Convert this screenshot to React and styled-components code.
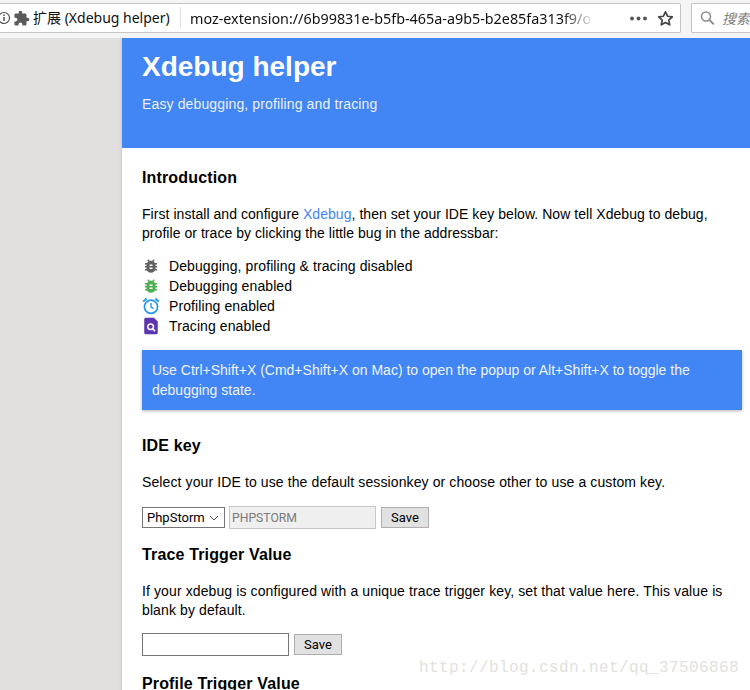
import styled, { createGlobalStyle } from "styled-components";
import { useState } from "react";

const GlobalStyle = createGlobalStyle`
  html, body {
    margin: 0;
    padding: 0;
    background: #e1e0de;
  }
  body {
    width: 750px;
    height: 690px;
    overflow: hidden;
    font-family: "Liberation Sans", Arial, sans-serif;
  }
`;

const BUG =
  "M20 8h-2.81c-.45-.78-1.07-1.45-1.82-1.96L17 4.41 15.59 3l-2.17 2.17C12.96 5.06 12.49 5 12 5c-.49 0-.96.06-1.41.17L8.41 3 7 4.41l1.62 1.63C7.88 6.55 7.26 7.22 6.81 8H4v2h2.09c-.05.33-.09.66-.09 1v1H4v2h2v1c0 .34.04.67.09 1H4v2h2.81c1.04 1.79 2.97 3 5.19 3s4.15-1.21 5.19-3H20v-2h-2.09c.05-.33.09-.66.09-1v-1h2v-2h-2v-1c0-.34-.04-.67-.09-1H20V8zm-6 8h-4v-2h4v2zm0-4h-4v-2h4v2z";

function BugIcon({ color }) {
  return (
    <svg width="18" height="18" viewBox="0 0 24 24">
      <path d={BUG} fill={color} />
    </svg>
  );
}

function AlarmIcon() {
  return (
    <svg width="18" height="18" viewBox="0 0 24 24" fill="none" stroke="#2196f3" strokeWidth="2.2">
      <circle cx="12" cy="13" r="8.8" />
      <path d="M12 8v5.4l3.4 2" strokeWidth="1.8" />
      <path d="M1.6 6.2 6.2 2M22.4 6.2 17.8 2" strokeWidth="2.4" />
    </svg>
  );
}

function TraceIcon() {
  return (
    <svg width="18" height="18" viewBox="0 0 24 24">
      <path d="M5 1h11l5 5v15a2 2 0 0 1-2 2H5a2 2 0 0 1-2-2V3a2 2 0 0 1 2-2z" fill="#5e35b1" />
      <circle cx="11.5" cy="13" r="3.8" fill="none" stroke="#fff" strokeWidth="2" />
      <path d="m14.4 15.9 3 3" stroke="#fff" strokeWidth="2.2" />
    </svg>
  );
}

function PuzzleIcon() {
  return (
    <svg width="17" height="17" viewBox="0 0 24 24">
      <path
        d="M20.5 11H19V7c0-1.1-.9-2-2-2h-4V3.5C13 2.12 11.88 1 10.5 1S8 2.12 8 3.5V5H4c-1.1 0-1.99.9-1.99 2v3.8H3.5c1.49 0 2.7 1.21 2.7 2.7s-1.21 2.7-2.7 2.7H2V20c0 1.1.9 2 2 2h3.8v-1.5c0-1.49 1.21-2.7 2.7-2.7 1.49 0 2.7 1.21 2.7 2.7V22H17c1.1 0 2-.9 2-2v-4h1.5c1.38 0 2.5-1.12 2.5-2.5S21.88 11 20.5 11z"
        fill="#5a5a5a"
      />
    </svg>
  );
}

function InfoIcon() {
  return (
    <svg width="12" height="14" viewBox="0 0 12 14" fill="none" stroke="#444">
      <circle cx="4" cy="7" r="5.5" strokeWidth="1.1" />
      <path d="M4 6v4M4 3.6v1.3" strokeWidth="1.4" />
    </svg>
  );
}

function DotsIcon() {
  return (
    <svg width="17" height="5" viewBox="0 0 17 5" fill="#555">
      <circle cx="2" cy="2.5" r="1.9" />
      <circle cx="8.5" cy="2.5" r="1.9" />
      <circle cx="15" cy="2.5" r="1.9" />
    </svg>
  );
}

function StarIcon() {
  return (
    <svg width="17" height="17" viewBox="0 0 24 24" fill="none" stroke="#444" strokeWidth="2.4" strokeLinejoin="round">
      <path d="M12 2.6l2.9 6.2 6.7.8-5 4.6 1.4 6.7-6-3.4-6 3.4 1.4-6.7-5-4.6 6.7-.8z" />
    </svg>
  );
}

function SearchIcon() {
  return (
    <svg width="18" height="18" viewBox="0 0 18 18" fill="none" stroke="#8a8a8a" strokeWidth="1.8">
      <circle cx="7.2" cy="7.2" r="5.4" />
      <path d="m11.2 11.2 5.4 5.4" strokeWidth="2.2" />
    </svg>
  );
}

function App() {
  const [ide, setIde] = useState("PhpStorm");

  return (
    <>
      <GlobalStyle />
      <Toolbar>
        <UrlBar>
          <InfoIcon />
          <PuzzleSlot>
            <PuzzleIcon />
          </PuzzleSlot>
          <SiteName>扩展 (Xdebug helper)</SiteName>
          <UrlText>moz-extension://6b99831e-b5fb-465a-a9b5-b2e85fa313f9/o</UrlText>
          <DotsSlot>
            <DotsIcon />
          </DotsSlot>
          <StarIcon />
        </UrlBar>
        <SearchBar>
          <SearchIcon />
          <SearchHint>搜索</SearchHint>
        </SearchBar>
      </Toolbar>
      <Page>
        <Sheet>
          <Banner>
            <BannerTitle>Xdebug helper</BannerTitle>
            <BannerSub>Easy debugging, profiling and tracing</BannerSub>
          </Banner>
          <Content>
            <SectionTitle>Introduction</SectionTitle>
            <Paragraph $spacing={0.05}>
              First install and configure <TextLink href="#">Xdebug</TextLink>, then set your IDE key below. Now tell
              Xdebug to debug, profile or trace by clicking the little bug in the addressbar:
            </Paragraph>
            <StateList>
              <StateRow>
                <BugIcon color="#616161" />
                Debugging, profiling &amp; tracing disabled
              </StateRow>
              <StateRow>
                <BugIcon color="#4caf50" />
                Debugging enabled
              </StateRow>
              <StateRow>
                <AlarmIcon />
                Profiling enabled
              </StateRow>
              <StateRow>
                <TraceIcon />
                Tracing enabled
              </StateRow>
            </StateList>
            <Notice>
              Use Ctrl+Shift+X (Cmd+Shift+X on Mac) to open the popup or Alt+Shift+X to toggle the debugging state.
            </Notice>
            <SectionTitle $top={26}>IDE key</SectionTitle>
            <Paragraph>Select your IDE to use the default sessionkey or choose other to use a custom key.</Paragraph>
            <FormRow>
              <IdeSelect value={ide} onChange={(e) => setIde(e.target.value)}>
                <option>PhpStorm</option>
                <option>Other</option>
              </IdeSelect>
              <KeyInput $disabled disabled value="PHPSTORM" readOnly />
              <SaveButton>Save</SaveButton>
            </FormRow>
            <SectionTitle $top={16}>Trace Trigger Value</SectionTitle>
            <Paragraph>
              If your xdebug is configured with a unique trace trigger key, set that value here. This value is blank by
              default.
            </Paragraph>
            <FormRow $top={13}>
              <KeyInput />
              <SaveButton>Save</SaveButton>
            </FormRow>
            <SectionTitle $top={18}>Profile Trigger Value</SectionTitle>
          </Content>
        </Sheet>
      </Page>
      <Watermark>http://blog.csdn.net/qq_37506868</Watermark>
    </>
  );
}

export default App;

const Toolbar = styled.div`
  height: 38px;
  box-sizing: border-box;
  padding-top: 3px;
  display: flex;
  background: #f5f5f5;
`;

const UrlBar = styled.div`
  width: 681px;
  height: 30px;
  box-sizing: border-box;
  display: flex;
  align-items: center;
  background: #fff;
  border: 1px solid #c4c4c4;
  border-left: none;
  border-radius: 0 2px 2px 0;
`;

const PuzzleSlot = styled.span`
  display: flex;
  margin-left: 1px;
  margin-right: 3px;
`;

const SiteName = styled.span`
  width: 148px;
  height: 22px;
  line-height: 22px;
  box-sizing: border-box;
  border-right: 1px solid #e2e2e2;
  font-family: "Noto Sans", "Noto Sans CJK SC", sans-serif;
  font-size: 14px;
  color: #111;
  white-space: nowrap;
  overflow: hidden;
`;

const UrlText = styled.span`
  width: 405px;
  margin-left: 9px;
  font-family: "Noto Sans", sans-serif;
  font-size: 14.35px;
  color: #111;
  white-space: nowrap;
  overflow: hidden;
  -webkit-mask-image: linear-gradient(to right, #000 92%, transparent 100%);
  mask-image: linear-gradient(to right, #000 92%, transparent 100%);
`;

const DotsSlot = styled.span`
  display: flex;
  margin-left: 35px;
  margin-right: 10px;
`;

const SearchBar = styled.div`
  margin-left: 10px;
  flex: 1;
  height: 30px;
  box-sizing: border-box;
  display: flex;
  align-items: center;
  gap: 7px;
  padding-left: 8px;
  background: #fff;
  border: 1px solid #c4c4c4;
  border-right: none;
  border-radius: 2px 0 0 2px;
  overflow: hidden;
`;

const SearchHint = styled.span`
  font-family: "Noto Sans CJK SC", sans-serif;
  font-size: 14px;
  font-style: italic;
  color: #808080;
  white-space: nowrap;
`;

const Page = styled.div`
  padding-left: 122px;
  height: 652px;
  overflow: hidden;
`;

const Sheet = styled.div`
  background: #fff;
  min-height: 652px;
  box-shadow: -1px 0 3px rgba(0, 0, 0, 0.1);
`;

const Banner = styled.header`
  height: 110px;
  box-sizing: border-box;
  padding: 13px 20px 0;
  background: #4285f4;
  color: #fff;
`;

const BannerTitle = styled.h1`
  margin: 0;
  font-size: 28px;
  line-height: 32px;
  font-weight: 700;
`;

const BannerSub = styled.p`
  margin: 11px 0 0;
  font-size: 14px;
  line-height: 20px;
  letter-spacing: 0.135px;
  color: #eaf1fe;
`;

const Content = styled.main`
  padding: 0 8px 0 20px;
  color: #000;
  font-size: 14px;
`;

const SectionTitle = styled.h2`
  margin: ${(p) => p.$top ?? 20}px 0 0;
  font-size: 16px;
  line-height: 19px;
  font-weight: 700;
  letter-spacing: 0.15px;
`;

const Paragraph = styled.p`
  margin: 18px 0 0;
  font-size: 14px;
  line-height: 19px;
  width: 590px;
  letter-spacing: ${(p) => p.$spacing ?? 0.11}px;
`;

const TextLink = styled.a`
  color: #4285f4;
  text-decoration: none;
`;

const StateList = styled.div`
  margin-top: 13px;
  display: flex;
  flex-direction: column;
`;

const StateRow = styled.div`
  height: 20px;
  display: flex;
  align-items: center;
  gap: 9px;
  font-size: 14px;
  letter-spacing: 0.1px;
`;

const Notice = styled.div`
  margin-top: 14px;
  padding: 10px 10px;
  height: 60px;
  box-sizing: border-box;
  background: #4285f4;
  color: #eef4fe;
  font-size: 14px;
  line-height: 20px;
  box-shadow: 0 1px 3px rgba(0, 0, 0, 0.3);
`;

const FormRow = styled.div`
  margin-top: ${(p) => p.$top ?? 14}px;
  display: flex;
  align-items: center;
`;

const IdeSelect = styled.select`
  width: 83px;
  height: 21px;
  box-sizing: border-box;
  padding: 0 0 0 4px;
  appearance: none;
  background: #fff
    url("data:image/svg+xml,%3Csvg xmlns='http://www.w3.org/2000/svg' width='10' height='6' fill='none' stroke='%23555'%3E%3Cpath d='M1 1l4 4 4-4'/%3E%3C/svg%3E")
    no-repeat right 5px center;
  border: 1px solid #767676;
  border-radius: 0;
  font-family: Roboto, sans-serif;
  font-size: 13px;
  color: #000;
  margin-right: 4px;
`;

const KeyInput = styled.input`
  width: 147px;
  height: 23px;
  box-sizing: border-box;
  padding: 0 2px;
  border: 1px solid ${(p) => (p.$disabled ? "#c8c8c8" : "#767676")};
  background: ${(p) => (p.$disabled ? "#efefef" : "#fff")};
  color: #7a7a7a;
  font-family: Roboto, sans-serif;
  font-size: 12.2px;
  -webkit-text-fill-color: #7a7a7a;
  opacity: 1;
`;

const SaveButton = styled.button`
  margin-left: 5px;
  width: 48px;
  height: 21px;
  box-sizing: border-box;
  padding: 0;
  background: #e1e1e1;
  border: 1px solid #adadad;
  border-radius: 0;
  font-family: Roboto, sans-serif;
  font-size: 13px;
  color: #000;
`;

const Watermark = styled.div`
  position: absolute;
  left: 419px;
  top: 659px;
  font-family: "Liberation Mono", monospace;
  font-size: 16px;
  letter-spacing: 0.4px;
  color: #e2e1dc;
  white-space: nowrap;
`;
